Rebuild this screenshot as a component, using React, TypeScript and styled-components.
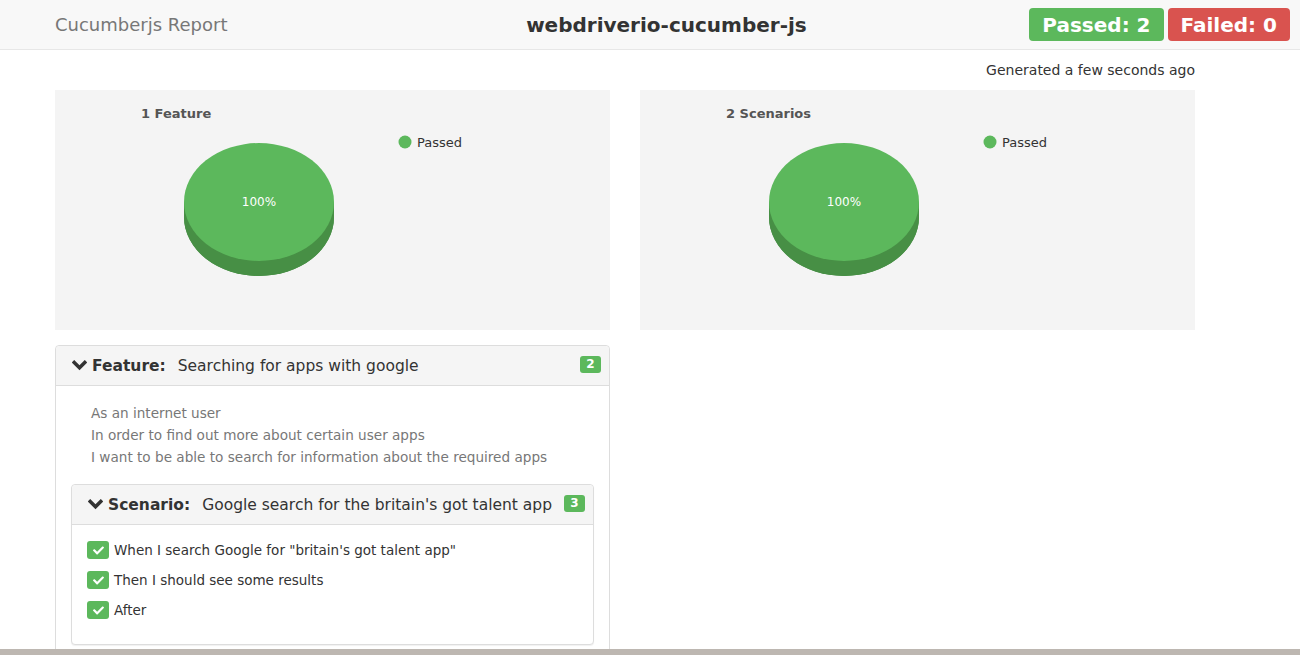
import React from 'react';
import styled, { createGlobalStyle } from 'styled-components';
import { FaCheck } from 'react-icons/fa';

const GlobalStyle = createGlobalStyle`
  html, body {
    margin: 0;
    padding: 0;
    background: #fff;
    font-family: "DejaVu Sans", sans-serif;
    color: #333;
  }
`;

const Page = styled.div`
  height: 655px;
  display: flex;
  flex-direction: column;
  overflow: hidden;
`;

const Scroller = styled.div`
  flex: 1;
  overflow: hidden;
`;

const WindowEdge = styled.div`
  height: 6px;
  background: #bdb7b1;
`;

const Navbar = styled.header`
  height: 49px;
  background: #f8f8f8;
  border-bottom: 1px solid #e7e7e7;
  display: flex;
  align-items: center;
  padding: 0 10px 0 55px;
`;

const Brand = styled.div`
  font-size: 18px;
  color: #777;
`;

const ProjectTitle = styled.h1`
  flex: 1;
  margin: 0;
  padding-left: 76px;
  text-align: center;
  font-size: 20px;
  font-weight: bold;
  color: #333;
`;

const Totals = styled.div`
  display: flex;
  gap: 4px;
`;

const TotalBadge = styled.span<{ $tone: 'pass' | 'fail' }>`
  height: 33px;
  display: flex;
  align-items: center;
  padding: 0 13px;
  border-radius: 4px;
  background: ${(p) => (p.$tone === 'pass' ? '#5cb85c' : '#d9534f')};
  color: #fff;
  font-size: 20px;
  font-weight: bold;
`;

const Container = styled.main`
  width: 1140px;
  margin-left: 55px;
`;

const Generated = styled.div`
  text-align: right;
  font-size: 14px;
  line-height: 20px;
  padding: 10px 0;
  color: #333;
`;

const ChartRow = styled.div`
  display: grid;
  grid-template-columns: 555px 555px;
  gap: 30px;
`;

const ChartBox = styled.div`
  height: 240px;
  background: #f4f4f4;

  svg {
    display: block;
  }
`;

const Columns = styled.div`
  display: grid;
  grid-template-columns: 555px 555px;
  gap: 30px;
  margin-top: 15px;
`;

const Panel = styled.section<{ $nested?: boolean }>`
  border: 1px solid #ddd;
  border-radius: 4px;
  background: #fff;
  box-shadow: ${(p) => (p.$nested ? '0 1px 1px rgba(0,0,0,0.06)' : 'none')};
`;

const PanelHeading = styled.div`
  height: 39px;
  background: #f5f5f5;
  border-bottom: 1px solid #ddd;
  border-radius: 4px 4px 0 0;
  display: flex;
  align-items: center;
  gap: 4px;
  padding: 0 8px 0 16px;
  font-size: 15.5px;
  color: #333;
`;

const Chevron = styled.svg`
  width: 15px;
  height: 11px;
  margin-right: 1px;
  flex-shrink: 0;
`;

const Keyword = styled.b`
  margin-right: 8px;
`;

const HeadingText = styled.span`
  flex: 1;
  white-space: nowrap;
`;

const CountBadge = styled.span`
  min-width: 21px;
  height: 17px;
  box-sizing: border-box;
  padding: 0 5px;
  border-radius: 3px;
  background: #5cb85c;
  color: #fff;
  font-size: 12px;
  font-weight: bold;
  line-height: 17px;
  text-align: center;
  align-self: flex-start;
  margin-top: 10px;
`;

const PanelBody = styled.div`
  padding: 16px 15px 15px;
`;

const Description = styled.div`
  padding-left: 20px;
  font-size: 13.6px;
  line-height: 22px;
  color: #777;
  margin-bottom: 16px;
`;

const StepList = styled.div`
  padding: 15px 15px 24px;
  display: flex;
  flex-direction: column;
  gap: 10px;
`;

const Step = styled.div`
  display: flex;
  align-items: center;
  height: 20px;
  font-size: 13.5px;
  color: #333;
`;

const StepStatus = styled.span`
  width: 22px;
  height: 18px;
  border-radius: 3px;
  background: #5cb85c;
  color: #fff;
  display: flex;
  align-items: center;
  justify-content: center;
  margin-right: 5px;
  font-size: 11px;
`;

const ChevronDown = () => (
  <Chevron viewBox="0 0 15 11">
    <polyline
      points="2.2,2.5 7.5,7.8 12.8,2.5"
      fill="none"
      stroke="#333"
      strokeWidth="3.6"
      strokeLinecap="square"
    />
  </Chevron>
);

const PieChart = ({ title, legend }: { title: string; legend: string }) => (
  <svg width="555" height="240" viewBox="0 0 555 240">
    <text x="86" y="28" fontSize="13" fontWeight="bold" fill="#555" fontFamily="DejaVu Sans, sans-serif">
      {title}
    </text>
    <path d="M129 112 L129 127 A75 59 0 0 0 279 127 L279 112 Z" fill="#478f45" />
    <ellipse cx="204" cy="127" rx="75" ry="59" fill="#478f45" />
    <ellipse cx="204" cy="112" rx="75" ry="59" fill="#5cb85c" />
    <text x="204" y="116" fontSize="12" fill="#fff" textAnchor="middle" fontFamily="DejaVu Sans, sans-serif">
      100%
    </text>
    <circle cx="350" cy="52" r="6.5" fill="#5cb85c" />
    <text x="362" y="57" fontSize="13" fill="#333" fontFamily="DejaVu Sans, sans-serif">
      {legend}
    </text>
  </svg>
);

const steps = [
  'When I search Google for "britain\'s got talent app"',
  'Then I should see some results',
  'After',
];

const App = () => {
  return (
    <Page>
      <GlobalStyle />
      <Scroller>
        <Navbar>
          <Brand>Cucumberjs Report</Brand>
          <ProjectTitle>webdriverio-cucumber-js</ProjectTitle>
          <Totals>
            <TotalBadge $tone="pass">Passed: 2</TotalBadge>
            <TotalBadge $tone="fail">Failed: 0</TotalBadge>
          </Totals>
        </Navbar>
        <Container>
          <Generated>Generated a few seconds ago</Generated>
          <ChartRow>
            <ChartBox>
              <PieChart title="1 Feature" legend="Passed" />
            </ChartBox>
            <ChartBox>
              <PieChart title="2 Scenarios" legend="Passed" />
            </ChartBox>
          </ChartRow>
          <Columns>
            <Panel>
              <PanelHeading>
                <ChevronDown />
                <Keyword>Feature:</Keyword>
                <HeadingText>Searching for apps with google</HeadingText>
                <CountBadge>2</CountBadge>
              </PanelHeading>
              <PanelBody>
                <Description>
                  <div>As an internet user</div>
                  <div>In order to find out more about certain user apps</div>
                  <div>I want to be able to search for information about the required apps</div>
                </Description>
                <Panel $nested>
                  <PanelHeading>
                    <ChevronDown />
                    <Keyword>Scenario:</Keyword>
                    <HeadingText>Google search for the britain's got talent app</HeadingText>
                    <CountBadge>3</CountBadge>
                  </PanelHeading>
                  <StepList>
                    {steps.map((s) => (
                      <Step key={s}>
                        <StepStatus>
                          <FaCheck />
                        </StepStatus>
                        {s}
                      </Step>
                    ))}
                  </StepList>
                </Panel>
              </PanelBody>
            </Panel>
            <div />
          </Columns>
        </Container>
      </Scroller>
      <WindowEdge />
    </Page>
  );
};

export default App;
